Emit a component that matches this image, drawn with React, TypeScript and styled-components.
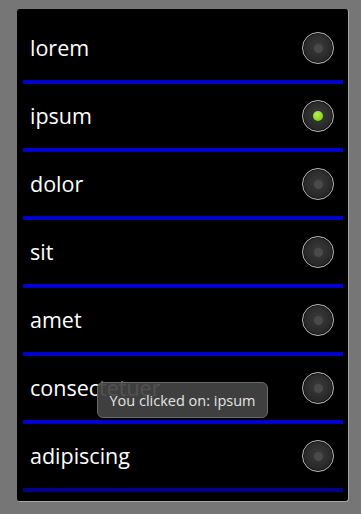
import React from "react";
import styled, { createGlobalStyle } from "styled-components";

const GlobalStyle = createGlobalStyle`
  html, body {
    margin: 0;
    padding: 0;
    background-color: #767676;
    font-family: "Open Sans", "DejaVu Sans", sans-serif;
  }
`;

const Screen = styled.div`
  position: relative;
  width: 361px;
  height: 514px;
  padding: 9px 12px 12px 17px;
  box-sizing: border-box;
`;

const Panel = styled.div`
  height: 493px;
  box-sizing: border-box;
  background-color: #000;
  border-radius: 3px;
  border-right: 1px solid #a8a8a8;
  border-bottom: 1px solid #a8a8a8;
  padding: 7px 5px 0 6px;
  display: flex;
  flex-direction: column;
`;

const Row = styled.div`
  display: flex;
  flex-direction: column;
`;

const RowBody = styled.div`
  height: 64px;
  display: flex;
  align-items: center;
  justify-content: space-between;
  padding: 0 9px 0 7px;
`;

const Label = styled.span`
  color: #fff;
  font-size: 21.5px;
  line-height: 1;
`;

const Divider = styled.div<{ $fade?: boolean }>`
  height: 4px;
  background-color: ${(p) => (p.$fade ? "#00008c" : "#0000cc")};
`;

const Radio = styled.div<{ $checked?: boolean }>`
  width: 30px;
  height: 30px;
  border-radius: 50%;
  border: 1.5px solid #b8b8b8;
  background: radial-gradient(circle at 50% 45%, #3c3c3c 0%, #262626 70%, #1c1c1c 100%);
  box-shadow: inset 0 0 0 1px #111;
  display: flex;
  align-items: center;
  justify-content: center;
  &::after {
    content: "";
    width: ${(p) => (p.$checked ? "10px" : "9px")};
    height: ${(p) => (p.$checked ? "10px" : "9px")};
    border-radius: 50%;
    background: ${(p) =>
      p.$checked
        ? "radial-gradient(circle at 40% 35%, #b6f050 0%, #8ed81c 60%, #6cb010 100%)"
        : "#4a4a4a"};
  }
`;

const Toast = styled.div`
  position: absolute;
  left: 97px;
  top: 382px;
  width: 171px;
  height: 36px;
  box-sizing: border-box;
  border-radius: 6px;
  border: 1px solid #6a6a6a;
  background-color: rgba(68, 68, 68, 0.93);
  color: #e4e4e4;
  font-size: 14.5px;
  display: flex;
  align-items: center;
  justify-content: center;
`;

const items = ["lorem", "ipsum", "dolor", "sit", "amet", "consectetuer", "adipiscing"];

export default function App() {
  return (
    <>
      <GlobalStyle />
      <Screen>
        <Panel>
          {items.map((item, i) => (
            <Row key={item}>
              <RowBody>
                <Label>{item}</Label>
                <Radio $checked={item === "ipsum"} />
              </RowBody>
              <Divider $fade={i === items.length - 1} />
            </Row>
          ))}
        </Panel>
        <Toast>You clicked on: ipsum</Toast>
      </Screen>
    </>
  );
}
